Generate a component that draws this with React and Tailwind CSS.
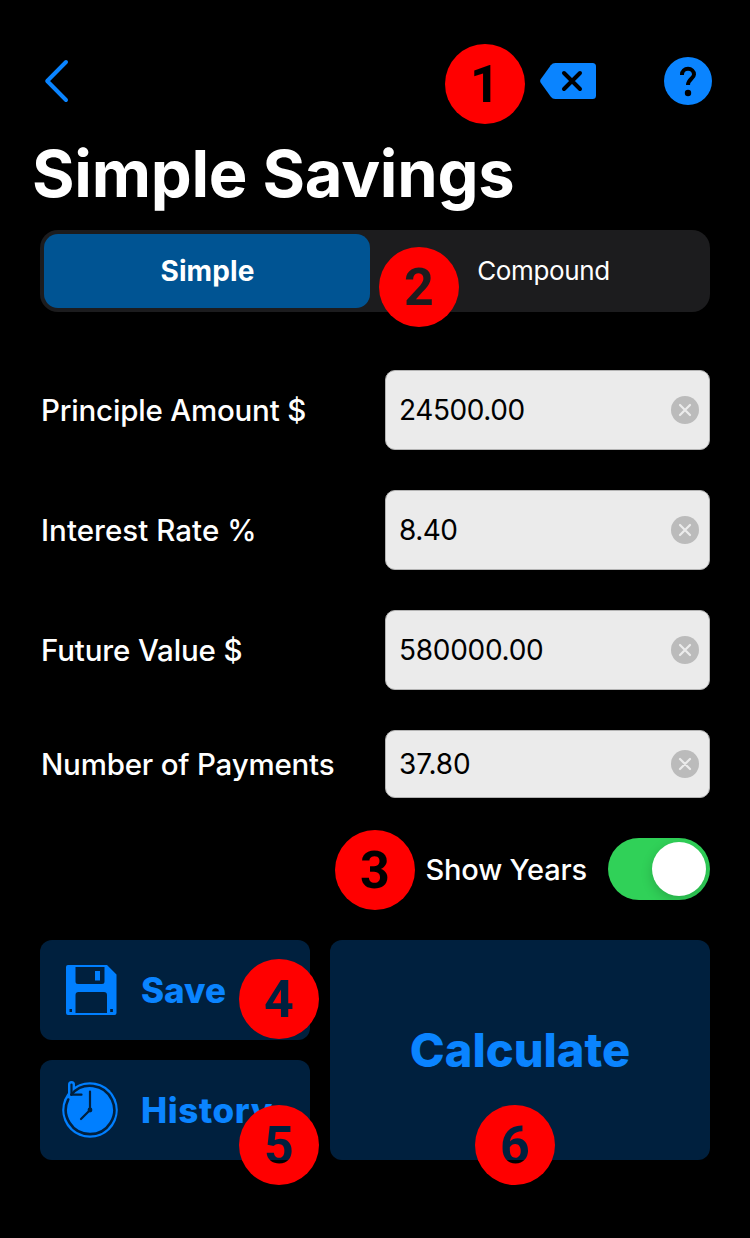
const fields = [
  { label: 'Principle Amount $', value: '24500.00', height: 'h-20', labelSpacing: 'tracking-[-0.2px]', valueSpacing: 'tracking-[-0.4px]' },
  { label: 'Interest Rate %', value: '8.40', height: 'h-20', labelSpacing: 'tracking-[0.05px]', valueSpacing: 'tracking-[-0.5px]' },
  { label: 'Future Value $', value: '580000.00', height: 'h-20', labelSpacing: 'tracking-[-0.15px]', valueSpacing: 'tracking-[-0.28px]' },
  { label: 'Number of Payments', value: '37.80', height: 'h-[68px]', labelSpacing: 'tracking-[-0.2px]', valueSpacing: 'tracking-[-0.1px]' },
];

function Badge({ position, ink, children }) {
  return (
    <div className={`absolute flex size-20 items-center justify-center rounded-full bg-[#ff0000] ${position}`}>
      <span className={`flex size-20 items-center justify-center bg-clip-text pt-0.5 font-['Roboto',sans-serif] text-[52px] font-bold leading-none text-transparent ${ink}`}>
        {children}
      </span>
    </div>
  );
}

function BackIcon() {
  return (
    <svg className="h-12 w-8" viewBox="0 0 32 48" fill="none" stroke="#0a84ff" strokeWidth="4" strokeLinecap="round" strokeLinejoin="round">
      <path d="M26 5 7.200 24 26 43" />
    </svg>
  );
}

function EraseIcon() {
  return (
    <svg className="h-9 w-14" viewBox="0 0 56 36" fill="none">
      <path d="M.7 16.300 10.800 2.200Q12.500 0 15.200 0H52.500Q56 0 56 3.500V32.500Q56 36 52.500 36H15.200Q12.500 36 10.800 33.800L.7 19.700Q-.4 18 .7 16.300Z" fill="#0a84ff" />
      <path d="M24 10 40 26M40 10 24 26" stroke="#000" strokeWidth="4" strokeLinecap="round" />
    </svg>
  );
}

function HelpIcon() {
  return (
    <svg className="size-12" viewBox="0 0 48 48" fill="none">
      <circle cx="24" cy="24" r="24" fill="#0a84ff" />
      <path d="M18 18V17.500A6 5.800 0 0 1 30 17.500C30 21.300 24 22 24 28" stroke="#000" strokeWidth="4" />
      <circle cx="24" cy="36" r="3.200" fill="#000" />
    </svg>
  );
}

function ClearIcon() {
  return (
    <svg className="size-7" viewBox="0 0 28 28" fill="none">
      <circle cx="14" cy="14" r="14" fill="#bbbbbb" />
      <path d="M9 9 19 19M19 9 9 19" stroke="#ebebeb" strokeWidth="2.200" strokeLinecap="round" />
    </svg>
  );
}

function SaveIcon() {
  return (
    <svg className="h-[50px] w-[51px]" viewBox="0 0 51 50">
      <path
        fill="#007fff"
        fillRule="evenodd"
        d="M2 0H41L50.500 9.500V48Q50.500 50 48.500 50H2Q0 50 0 48V2Q0 0 2 0ZM9.500 2V16.500Q9.500 19 12 19H36Q38.500 19 38.500 16.500V2ZM29 6H34V15.500H29ZM9.500 48V30Q9.500 27 12.500 27H38Q41 27 41 30V48ZM3.500 44H6V47H3.500ZM44.200 44H46.900V47H44.200Z"
      />
    </svg>
  );
}

function HistoryIcon() {
  return (
    <svg className="h-[60px] w-14 -translate-y-0.5" viewBox="0 0 56 60" fill="none">
      <circle cx="28" cy="32" r="27.800" fill="#007fff" />
      <path d="M9.500 6.500V16" stroke="#007fff" strokeWidth="7" strokeLinecap="round" />
      <path d="M9.400 16.500A24.200 24.200 0 1 1 6.200 21.500" stroke="#00203e" strokeWidth="2.600" strokeLinecap="round" />
      <path d="M9.500 6.500V16.700H19.500" stroke="#00203e" strokeWidth="2.200" strokeLinecap="round" />
      <path d="M28 13.500V32L19 41" stroke="#00203e" strokeWidth="2.200" strokeLinecap="round" />
      <circle cx="28" cy="32" r="2.400" fill="#00203e" />
    </svg>
  );
}

export default function App() {
  return (
    <main className="relative h-[1238px] w-[750px] overflow-hidden bg-black px-10 font-['Inter',sans-serif] text-white">
      <header className="flex h-[137px] items-start justify-between pt-[57px]">
        <button aria-label="Back"><BackIcon /></button>
        <div className="-mr-0.5 flex h-12 items-center gap-[68px]">
          <button aria-label="Clear all"><EraseIcon /></button>
          <button aria-label="Help"><HelpIcon /></button>
        </div>
      </header>

      <h1 className="-ml-2 h-[93px] whitespace-nowrap text-[65px] font-bold leading-[74px] tracking-[-0.25px]">Simple Savings</h1>

      <div className="flex h-[82px] rounded-[18px] bg-[#1c1c1e] p-1">
        <button className="h-[74px] w-[326px] rounded-[14px] bg-[#005493] pl-px text-[28px] font-bold tracking-[0.1px]">Simple</button>
        <button className="flex-1 pb-0.5 pl-[11px] text-[26px] tracking-[-0.35px]">Compound</button>
      </div>

      <section className="mt-[58px] flex flex-col gap-10">
        {fields.map((field) => (
          <div key={field.label} className={`flex items-center justify-between ${field.height}`}>
            <label className={`whitespace-nowrap pl-px text-[29.5px] font-[450] ${field.labelSpacing}`}>{field.label}</label>
            <div className="flex h-full w-[325px] items-center justify-between rounded-[10px] border border-[#b4b4b4] bg-[#ebebeb] pl-[13px] pr-2.5 text-black">
              <span className={`text-[28px] ${field.valueSpacing}`}>{field.value}</span>
              <ClearIcon />
            </div>
          </div>
        ))}
      </section>

      <div className="mt-10 flex h-[62px] items-center justify-end gap-[21px]">
        <span className="pt-0.5 text-[29px] font-[450] tracking-[-0.18px]">Show Years</span>
        <span className="flex h-[62px] w-[102px] items-center justify-end rounded-full bg-[#30d158] p-1">
          <span className="size-[54px] rounded-full bg-white shadow-[0_4px_12px_rgba(0,0,0,0.18)]" />
        </span>
      </div>

      <div className="mt-10 grid grid-cols-[270px_380px] grid-rows-[100px_100px] gap-5 font-extrabold text-[#0a84ff]">
        <button className="flex items-center rounded-xl bg-[#00203e] pl-[26px] text-[35px]">
          <SaveIcon />
          <span className="ml-6">Save</span>
        </button>
        <button className="row-span-2 rounded-xl bg-[#00203e] text-[47px]">Calculate</button>
        <button className="flex items-center rounded-xl bg-[#00203e] pl-[22px] text-[35px] tracking-[0.6px]">
          <HistoryIcon />
          <span className="ml-[23px]">History</span>
        </button>
      </div>

      <Badge position="left-[445px] top-11" ink="bg-black">1</Badge>
      <Badge position="left-[379px] top-[247px]" ink="bg-[#1c1c1e]">2</Badge>
      <Badge position="left-[335px] top-[830px]" ink="bg-black">3</Badge>
      <Badge position="left-[239px] top-[959px]" ink="bg-[#00203e]">4</Badge>
      <Badge position="left-[239px] top-[1105px]" ink="bg-[linear-gradient(#00203e_55px,#000_55px)]">5</Badge>
      <Badge position="left-[475px] top-[1105px]" ink="bg-[linear-gradient(#00203e_55px,#000_55px)]">6</Badge>
    </main>
  );
}
